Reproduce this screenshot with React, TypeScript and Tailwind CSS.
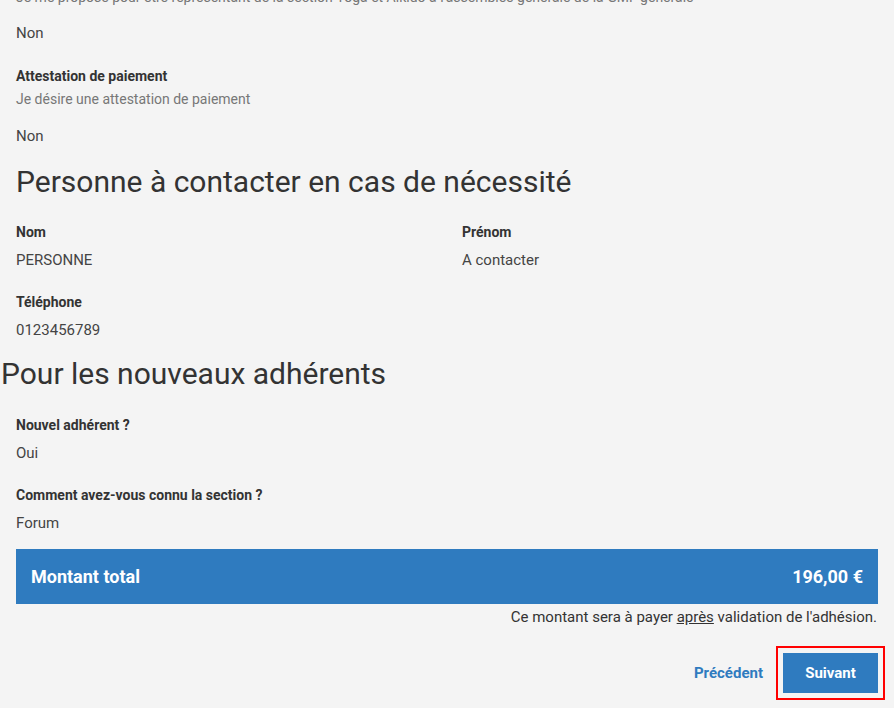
import React from 'react';

function Field({ label, value, hint }: { label: string; value: string; hint?: string }) {
  return (
    <div>
      <p className="text-sm font-bold leading-5 text-[#333]">{label}</p>
      {hint && <p className="mt-[3px] text-sm leading-5 text-[#777]">{hint}</p>}
      <p className={`${hint ? 'mt-[17px]' : 'mt-2'} text-[15px] leading-5 text-[#444]`}>{value}</p>
    </div>
  );
}

export default function App() {
  return (
    <div
      className="min-h-[708px] overflow-hidden bg-[#f4f4f4] text-[#333]"
      style={{ fontFamily: 'Roboto, "Liberation Sans", sans-serif' }}
    >
      <div className="px-4">
        <p className="-mt-[13px] whitespace-nowrap text-sm leading-5 text-[#777]">
          Je me propose pour être représentant de la section Yoga et Aïkido à l'assemblée générale de la GMF générale
        </p>
        <p className="mt-4 text-[15px] leading-5 text-[#444]">Non</p>
        <div className="mt-[23px]">
          <Field label="Attestation de paiement" hint="Je désire une attestation de paiement" value="Non" />
        </div>
        <h2 className="mt-[19px] text-[30px] leading-[34px] text-[#333]">
          Personne à contacter en cas de nécessité
        </h2>
      </div>

      <div className="mt-[23px] grid grid-cols-2">
        <div className="pl-4">
          <Field label="Nom" value="PERSONNE" />
        </div>
        <div className="pl-[15px]">
          <Field label="Prénom" value="A contacter" />
        </div>
      </div>
      <div className="mt-[22px] pl-4">
        <Field label="Téléphone" value="0123456789" />
      </div>

      <h2 className="mt-[17px] pl-px text-[30px] leading-[34px] text-[#333]">Pour les nouveaux adhérents</h2>

      <div className="px-4">
        <div className="mt-6">
          <Field label="Nouvel adhérent ?" value="Oui" />
        </div>
        <div className="mt-[22px]">
          <Field label="Comment avez-vous connu la section ?" value="Forum" />
        </div>

        <div className="mt-4 flex h-[55px] items-center justify-between bg-[#2f7bbf] px-[15px] text-lg font-bold text-white">
          <span>Montant total</span>
          <span>196,00 €</span>
        </div>
        <p className="mt-[3px] pr-px text-right text-[15px] leading-5 text-[#333]">
          Ce montant sera à payer <span className="underline">après</span> validation de l'adhésion.
        </p>

        <div className="mt-[26px] flex items-center justify-end gap-5">
          <button className="text-[15px] font-bold text-[#2f7bbf]">Précédent</button>
          <button className="h-10 w-[95px] bg-[#2f7bbf] text-[15px] font-bold text-white outline-2 outline-offset-[5px] outline-[#f00] outline-solid">
            Suivant
          </button>
        </div>
      </div>
    </div>
  );
}
